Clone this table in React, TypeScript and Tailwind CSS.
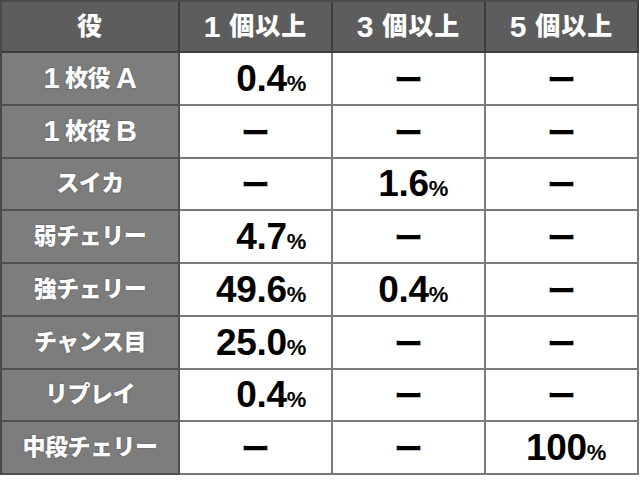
import React from 'react';

const FONT = '"Liberation Sans", "Noto Sans CJK JP", sans-serif';

type Cell = string | null; // null = dash

const rows: { label: [string, string, string]; values: Cell[] }[] = [
  { label: ['1', ' 枚役 ', 'A'], values: ['0.4', null, null] },
  { label: ['1', ' 枚役 ', 'B'], values: [null, null, null] },
  { label: ['', 'スイカ', ''], values: [null, '1.6', null] },
  { label: ['', '弱チェリー', ''], values: ['4.7', null, null] },
  { label: ['', '強チェリー', ''], values: ['49.6', '0.4', null] },
  { label: ['', 'チャンス目', ''], values: ['25.0', null, null] },
  { label: ['', 'リプレイ', ''], values: ['0.4', null, null] },
  { label: ['', '中段チェリー', ''], values: [null, null, '100'] },
];

const headers: [string, string][] = [
  ['', '役'],
  ['1', ' 個以上'],
  ['3', ' 個以上'],
  ['5', ' 個以上'],
];

// right padding for numbers in each data column
const padRight = ['pr-[25px]', 'pr-[36px]', 'pr-[31px]'];

function Value({ v, col }: { v: Cell; col: number }) {
  if (v === null) {
    return (
      <div className="flex h-full items-center justify-center bg-white border-r-2 border-b-2 border-[#7a7a7a]">
        <span className="text-[29px] font-bold leading-none text-black" style={{ fontFamily: '"Noto Sans CJK JP", sans-serif' }}>
          ー
        </span>
      </div>
    );
  }
  return (
    <div className={`flex h-full items-center justify-end bg-white border-r-2 border-b-2 border-[#7a7a7a] ${padRight[col]}`}>
      <span className="font-bold leading-none text-black tracking-[-0.3px]" style={{ fontFamily: FONT }}>
        <span className="text-[37px]">{v}</span>
        <span className="text-[22px]">%</span>
      </span>
    </div>
  );
}

export default function App() {
  return (
    <div className="w-[640px] h-[484px] bg-white">
      <div
        className="grid w-[639px] grid-cols-[178px_153px_153px_153px] grid-rows-[51px_repeat(8,52.75px)] border-l-2 border-t-2 border-[#4a4a4a]"
        style={{ fontFamily: FONT }}
      >
        {headers.map(([n, t]) => (
          <div
            key={n + t}
            className="flex items-center justify-center whitespace-pre bg-[#5d5d5d] border-r-2 border-b-2 border-[#3e3e3e] text-[25px] leading-none font-black tracking-[1px] text-white"
          >
            {n && <span className="text-[30px] font-bold">{n}</span>}
            <span>{t}</span>
          </div>
        ))}
        {rows.map((r) => (
          <React.Fragment key={r.label.join('')}>
            <div className="flex items-center justify-center whitespace-pre bg-[#7d7d7d] border-r-2 border-b-2 border-[#505050] text-[23px] leading-none font-black tracking-[-0.5px] text-white [text-shadow:0_0_2px_rgba(0,0,0,0.35)]">
              {r.label[0] && <span className="text-[29px] font-bold">{r.label[0]}</span>}
              <span>{r.label[1]}</span>
              {r.label[2] && <span className="text-[29px] font-bold">{r.label[2]}</span>}
            </div>
            {r.values.map((v, i) => (
              <Value key={i} v={v} col={i} />
            ))}
          </React.Fragment>
        ))}
      </div>
    </div>
  );
}
